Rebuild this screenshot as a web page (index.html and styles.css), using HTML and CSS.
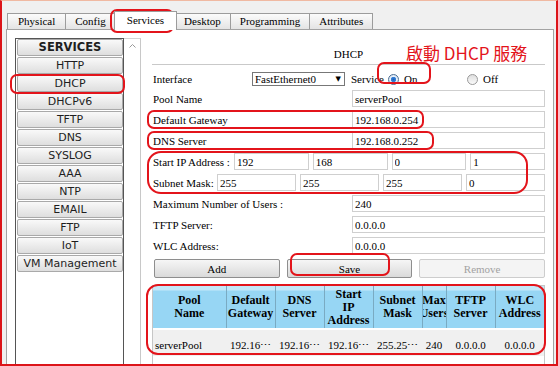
FILE: index.html
```html
<!DOCTYPE html>
<html lang="zh-Hant">
<head>
    <meta charset="UTF-8">
    <meta name="viewport" content="width=device-width, initial-scale=1.0">
    <title>DHCP Services</title>
    <link rel="stylesheet" href="styles.css">
</head>
<body>

<div class="window">
    <div class="tabs">
        <div class="tab">Physical</div>
        <div class="tab">Config</div>
        <div class="tab active">Services</div>
        <div class="tab">Desktop</div>
        <div class="tab">Programming</div>
        <div class="tab">Attributes</div>
    </div>

    <div class="panel">
        <div class="sidebar">
            <div class="service-list">
                <div class="svc head">SERVICES</div>
                <div class="svc">HTTP</div>
                <div class="svc">DHCP</div>
                <div class="svc">DHCPv6</div>
                <div class="svc">TFTP</div>
                <div class="svc">DNS</div>
                <div class="svc">SYSLOG</div>
                <div class="svc">AAA</div>
                <div class="svc">NTP</div>
                <div class="svc">EMAIL</div>
                <div class="svc">FTP</div>
                <div class="svc">IoT</div>
                <div class="svc">VM Management</div>
            </div>
            <div class="scrollbar">
                <svg class="arrow" width="7" height="4" viewBox="0 0 7 4"><path d="M0.5 3.5 L3.5 0.5 L6.5 3.5" fill="none" stroke="#9a9a9a" stroke-width="1"/></svg>
            </div>
        </div>

        <div class="main">
            <div class="title">DHCP</div>

            <div class="iface-row">
                <span class="iface-label">Interface</span>
                <div class="select">FastEthernet0<span class="caret">&#9660;</span></div>
                <span class="svc-label">Service</span>
                <span class="radio on"></span>
                <span class="opt-on">On</span>
                <span class="radio"></span>
                <span>Off</span>
            </div>

            <div class="field"><span class="lbl">Pool Name</span><input type="text" value="serverPool"></div>
            <div class="field"><span class="lbl">Default Gateway</span><input type="text" value="192.168.0.254"></div>
            <div class="field"><span class="lbl">DNS Server</span><input type="text" value="192.168.0.252"></div>
            <div class="field quad">
                <span class="lbl ip-lbl">Start IP Address :</span>
                <input type="text" value="192"><input type="text" value="168"><input type="text" value="0"><input type="text" value="1">
            </div>
            <div class="field quad">
                <span class="lbl mask-lbl">Subnet Mask:</span>
                <input type="text" value="255"><input type="text" value="255"><input type="text" value="255"><input type="text" value="0">
            </div>
            <div class="field"><span class="lbl">Maximum Number of Users :</span><input type="text" value="240"></div>
            <div class="field"><span class="lbl">TFTP Server:</span><input type="text" value="0.0.0.0"></div>
            <div class="field"><span class="lbl">WLC Address:</span><input type="text" value="0.0.0.0"></div>

            <div class="actions">
                <button>Add</button>
                <button>Save</button>
                <button disabled>Remove</button>
            </div>

            <div class="pool-box">
                <table class="pool-table">
                    <colgroup>
                        <col class="c-name"><col class="c-std"><col class="c-std"><col class="c-std"><col class="c-std"><col class="c-max"><col class="c-std"><col class="c-std">
                    </colgroup>
                    <thead>
                        <tr>
                            <th>Pool<br>Name</th>
                            <th>Default<br>Gateway</th>
                            <th>DNS<br>Server</th>
                            <th>Start<br>IP<br>Address</th>
                            <th>Subnet<br>Mask</th>
                            <th><div class="clip"><span>Max<br>Users</span></div></th>
                            <th>TFTP<br>Server</th>
                            <th>WLC<br>Address</th>
                        </tr>
                    </thead>
                    <tbody>
                        <tr>
                            <td class="left">serverPool</td>
                            <td>192.16&#8943;</td>
                            <td>192.16&#8943;</td>
                            <td>192.16&#8943;</td>
                            <td>255.25&#8943;</td>
                            <td>240</td>
                            <td>0.0.0.0</td>
                            <td>0.0.0.0</td>
                        </tr>
                    </tbody>
                </table>
            </div>
        </div>
    </div>

    <!-- anotaciones en rojo -->
    <div class="note">啟動 DHCP 服務</div>
    <div class="mark mark-tab"></div>
    <div class="mark mark-dhcp"></div>
    <div class="mark mark-on"></div>
    <div class="mark mark-gw"></div>
    <div class="mark mark-dns"></div>
    <div class="mark mark-ip"></div>
    <div class="mark mark-save"></div>
    <div class="mark mark-table"></div>
</div>

</body>
</html>
```

FILE: styles.css
```css
body {
    margin: 0;
    font-family: "Liberation Serif", serif;
    font-size: 11px;
    color: #000;
}
.window {
    position: relative;
    width: 558px;
    height: 366px;
    box-sizing: border-box;
    border: 2px solid #dc1419;
    border-top: 1px solid #f0b9a2;
    background-color: #f0f0f0;
    display: flex;
    flex-direction: column;
    overflow: hidden;
}

/* pestañas */
.tabs {
    display: flex;
    align-items: flex-end;
    height: 28px;
    padding-left: 5px;
}
.tab {
    height: 15px;
    line-height: 15px;
    padding: 0 9px;
    border: 1px solid #9c9c9c;
    border-bottom: none;
    border-left: none;
    background: linear-gradient(#fbfbfb, #e4e4e4);
}
.tab:first-child {
    border-left: 1px solid #9c9c9c;
    padding: 0 10px;
}
.tab.active {
    height: 18px;
    line-height: 17px;
    padding: 0 12px;
    margin: 0 -2px -1px -2px;
    border-left: 1px solid #9c9c9c;
    background: #fff;
    position: relative;
    z-index: 1;
}

.panel {
    flex: 1;
    min-height: 0;
    display: flex;
    margin: 0 2px 0 4px;
    padding: 8px 0 0 8px;
    border: 1px solid #a3a3a3;
    border-bottom: none;
    background-color: #fff;
}

/* lista de servicios */
.sidebar {
    display: flex;
    width: 126px;
}
.service-list {
    width: 109px;
    box-sizing: border-box;
    border: 1px solid #555;
    border-bottom: none;
    padding: 0 0 0 1px;
}
.svc {
    height: 15px;
    line-height: 15px;
    margin-bottom: 1px;
    border: 1px solid #a9a9a9;
    border-radius: 2px;
    background: linear-gradient(#f9f9f9, #dedede);
    text-align: center;
    font-family: "DejaVu Sans", sans-serif;
    font-size: 11px;
    color: #1e1e1e;
}
.svc.head {
    font-weight: bold;
    font-size: 11.5px;
}
.scrollbar {
    flex: 1;
    border-top: 1px solid #d4d4d4;
    border-right: 1px solid #c8c8c8;
    text-align: center;
}
.scrollbar .arrow {
    display: block;
    margin: 5px auto 0;
}

/* panel DHCP */
.main {
    width: 393px;
    margin-left: 11px;
    display: flex;
    flex-direction: column;
}
.title {
    height: 27px;
    border-bottom: 1px solid #c9c9c9;
    display: flex;
    align-items: flex-end;
    justify-content: center;
    box-sizing: border-box;
    line-height: 19px;
}
.iface-row {
    display: flex;
    align-items: center;
    height: 14px;
    margin-top: 7px;
}
.iface-label {
    width: 100px;
    padding-left: 1px;
    box-sizing: border-box;
}
.select {
    width: 93px;
    height: 14px;
    line-height: 12px;
    box-sizing: border-box;
    border: 1px solid #777;
    padding-left: 2px;
    position: relative;
}
.caret {
    position: absolute;
    right: 3px;
    top: 0;
    font-size: 7px;
    font-family: "DejaVu Sans", sans-serif;
}
.svc-label {
    width: 37px;
    margin-left: 6px;
}
.radio {
    width: 11px;
    height: 11px;
    box-sizing: border-box;
    border: 1px solid #9a9a9a;
    border-radius: 50%;
    background: linear-gradient(#dedede, #fafafa);
    margin-right: 5px;
}
.radio.on {
    border-color: #4d6f94;
    background: radial-gradient(circle, #1c5fb8 0, #3b86dc 2.5px, #e9f1fb 3px, #c9d6e4 100%);
}
.opt-on {
    width: 63px;
}

.field {
    display: flex;
    align-items: center;
    height: 17px;
    margin-top: 4px;
    gap: 4px;
}
.field:first-of-type {
    margin-top: 5px;
}
.lbl {
    width: 195px;
    padding-left: 1px;
    white-space: nowrap;
}
.ip-lbl {
    width: 77px;
}
.mask-lbl {
    width: 60px;
}
input[type="text"] {
    flex: 1;
    min-width: 0;
    height: 17px;
    box-sizing: border-box;
    border: 1px solid #cfcfcf;
    padding: 0 2px;
    font-family: "Liberation Serif", serif;
    font-size: 11px;
    color: #000;
    background: #fff;
}

.actions {
    display: flex;
    gap: 7px;
    padding-left: 2px;
    margin-top: 5px;
}
.actions button {
    flex: 1;
    height: 19px;
    border: 1px solid #8e8e8e;
    border-radius: 2px;
    background: linear-gradient(#f6f6f6, #dadada);
    font-family: "Liberation Serif", serif;
    font-size: 11px;
    color: #000;
    padding: 0;
}
.actions button:disabled {
    border-color: #cdcdcd;
    background: #f4f4f4;
    color: #a2a2a2;
}

/* tabla de pools */
.pool-box {
    flex: 1;
    margin-top: 7px;
    border: 1px solid #c6c6c6;
    border-bottom: none;
}
.pool-table {
    width: 100%;
    table-layout: fixed;
    border-collapse: collapse;
}
.c-name { width: 73px; }
.c-std { width: 49px; }
.c-max { width: 24px; }
.pool-table th {
    height: 42px;
    padding: 0;
    background: linear-gradient(#c4e8f9 0, #c4e8f9 4px, #97d6f4 5px, #97d6f4 100%);
    border-right: 1px solid #7aaac2;
    font-size: 12px;
    font-weight: bold;
    line-height: 13px;
    overflow: hidden;
}
.pool-table th:last-child {
    border-right: none;
}
.clip {
    display: flex;
    justify-content: center;
    overflow: hidden;
    white-space: nowrap;
}
.pool-table tbody tr {
    background-color: #f0f0f0;
}
.pool-table td {
    height: 22px;
    padding: 4px 1px 0;
    text-align: center;
    white-space: nowrap;
    overflow: hidden;
    border-top: 2px solid #fff;
}
.pool-table td.left {
    text-align: left;
    padding-left: 2px;
}

/* anotaciones */
.note {
    position: absolute;
    left: 404px;
    top: 42px;
    font-family: "Noto Sans CJK TC", sans-serif;
    font-size: 17px;
    line-height: 20px;
    color: #e3141b;
}
.mark {
    position: absolute;
    border: 2px solid #e3141b;
    border-radius: 7px;
    box-sizing: border-box;
}
.mark-tab { left: 108px; top: 8px; width: 64px; height: 24px; }
.mark-dhcp { left: 8px; top: 73px; width: 115px; height: 20px; }
.mark-on { left: 375px; top: 61px; width: 54px; height: 22px; }
.mark-gw { left: 145px; top: 109px; width: 277px; height: 19px; }
.mark-dns { left: 145px; top: 130px; width: 287px; height: 19px; }
.mark-ip { left: 145px; top: 150px; width: 381px; height: 43px; border-radius: 14px; }
.mark-save { left: 288px; top: 252px; width: 100px; height: 23px; }
.mark-table { left: 144px; top: 283px; width: 400px; height: 71px; border-radius: 12px; }
```
